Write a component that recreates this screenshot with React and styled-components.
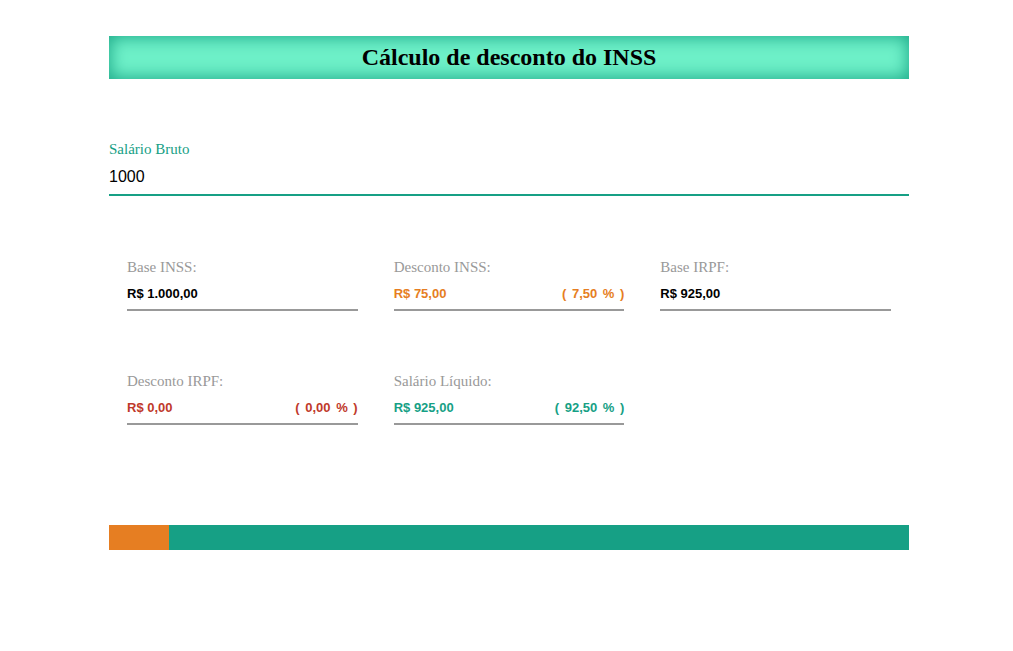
import React from "react";
import styled, { createGlobalStyle } from "styled-components";

const Global = createGlobalStyle`
  html, body { margin: 0; padding: 0; background: #ffffff; }
  body { padding-left: 5px; font-family: "Liberation Serif", "Times New Roman", serif; }
`;

const Page = styled.div`
  width: 800px;
  margin: 36px auto 0;
`;

const Header = styled.header`
  height: 43px;
  display: flex;
  align-items: center;
  justify-content: center;
  background: #6ef0c8;
  box-shadow: inset 0 0 16px 2px #22ad8c;
`;

const Title = styled.h1`
  margin: 0;
  font-family: "Liberation Serif", "Times New Roman", serif;
  font-weight: bold;
  font-size: 24px;
  color: #000;
`;

const Field = styled.div`
  margin-top: 62px;
  display: flex;
  flex-direction: column;
`;

const FieldLabel = styled.label`
  font-family: "Liberation Serif", "Times New Roman", serif;
  font-size: 15px;
  line-height: 16px;
  color: #16a085;
`;

const Input = styled.input`
  box-sizing: content-box;
  height: 35px;
  padding: 2px 0 0;
  margin: 0;
  border: none;
  border-bottom: 2px solid #16a085;
  outline: none;
  font-family: "Liberation Sans", Arial, sans-serif;
  font-size: 16px;
  color: #000;
  background: transparent;
`;

const Grid = styled.div`
  margin-top: 63px;
  display: grid;
  grid-template-columns: repeat(3, 1fr);
  row-gap: 62px;
`;

const Cell = styled.div`
  padding: 0 18px;
`;

const CellLabel = styled.div`
  font-family: "Liberation Serif", "Times New Roman", serif;
  font-size: 15px;
  line-height: 16px;
  color: #999999;
`;

const ValueRow = styled.div`
  margin-top: 12px;
  display: flex;
  justify-content: space-between;
  padding-bottom: 8px;
  border-bottom: 2px solid #999999;
  font-family: "Liberation Sans", Arial, sans-serif;
  font-weight: bold;
  font-size: 13px;
  line-height: 14px;
  color: ${(p) => p.$color || "#000"};
`;

const Percent = styled.span`
  word-spacing: 2px;
`;

const Footer = styled.footer`
  margin-top: 100px;
  height: 25px;
  display: flex;
  background: #16a085;
`;

const FooterAccent = styled.div`
  width: 60px;
  background: #e67e22;
`;

const items = [
  { label: "Base INSS:", value: "R$ 1.000,00" },
  { label: "Desconto INSS:", value: "R$ 75,00", pct: "( 7,50 % )", color: "#e67e22" },
  { label: "Base IRPF:", value: "R$ 925,00" },
  { label: "Desconto IRPF:", value: "R$ 0,00", pct: "( 0,00 % )", color: "#c0392b" },
  { label: "Salário Líquido:", value: "R$ 925,00", pct: "( 92,50 % )", color: "#16a085" },
];

export default function App() {
  return (
    <>
      <Global />
      <Page>
        <Header>
          <Title>Cálculo de desconto do INSS</Title>
        </Header>
        <Field>
          <FieldLabel>Salário Bruto</FieldLabel>
          <Input type="text" defaultValue="1000" />
        </Field>
        <Grid>
          {items.map((it) => (
            <Cell key={it.label}>
              <CellLabel>{it.label}</CellLabel>
              <ValueRow $color={it.color}>
                <span>{it.value}</span>
                {it.pct && <Percent>{it.pct}</Percent>}
              </ValueRow>
            </Cell>
          ))}
        </Grid>
        <Footer>
          <FooterAccent />
        </Footer>
      </Page>
    </>
  );
}
